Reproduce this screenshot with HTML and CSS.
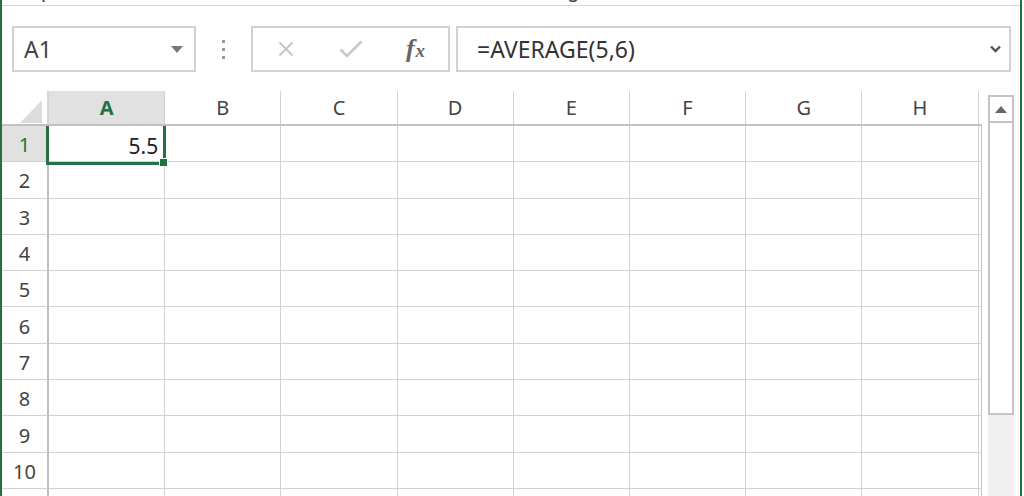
FILE: index.html
```html
<!DOCTYPE html>
<html lang="en">
<head>
<meta charset="utf-8">
<title>Sheet</title>
<link rel="stylesheet" href="styles.css">
</head>
<body>
<div class="window">
  <div class="ribbon-tail">
    <div class="ribbon-labels"><span class="lbl lbl-clip">Clipboard</span><span class="lbl lbl-align">Alignment</span></div>
  </div>

  <div class="formula-bar">
    <div class="namebox">
      <span>A1</span>
      <svg class="nb-arrow" width="12" height="7" viewBox="0 0 12 7"><polygon points="0,0 12,0 6,7" fill="#777"/></svg>
    </div>
    <div class="grip"><i></i><i></i><i></i></div>
    <div class="fxbox">
      <svg width="16" height="16" viewBox="0 0 16 16"><path d="M1.5 1.5 L14.5 14.5 M14.5 1.5 L1.5 14.5" stroke="#c8c8c8" stroke-width="2.2" fill="none"/></svg>
      <svg width="24" height="18" viewBox="0 0 24 18"><polyline points="1.5,9.5 8,16 22.5,1.5" stroke="#c8c8c8" stroke-width="2.6" fill="none"/></svg>
      <span class="fx"><span class="fx-f">f</span><span class="fx-x">x</span></span>
    </div>
    <div class="formula">
      <span>=AVERAGE(5,6)</span>
      <svg width="11" height="8" viewBox="0 0 11 8"><polyline points="1,1.5 5.5,6 10,1.5" stroke="#555" stroke-width="2.4" fill="none"/></svg>
    </div>
  </div>

  <div class="main">
    <div class="sheet">
      <div class="colhead">
        <div class="corner"><svg width="22" height="23" viewBox="0 0 22 23"><polygon points="22,0 22,23 0,23" fill="#dcdcdc"/></svg></div>
        <div class="ch sel">A</div>
        <div class="ch">B</div>
        <div class="ch">C</div>
        <div class="ch">D</div>
        <div class="ch">E</div>
        <div class="ch">F</div>
        <div class="ch">G</div>
        <div class="ch">H</div>
        <div class="ch fill"></div>
      </div>
      <div class="rows">
        <div class="rh sel">1</div><div class="c val">5.5<div class="selbox"><div class="handle"></div></div></div><div class="c"></div><div class="c"></div><div class="c"></div><div class="c"></div><div class="c"></div><div class="c"></div><div class="c"></div><div class="c fill"></div>
        <div class="rh">2</div><div class="c"></div><div class="c"></div><div class="c"></div><div class="c"></div><div class="c"></div><div class="c"></div><div class="c"></div><div class="c"></div><div class="c fill"></div>
        <div class="rh">3</div><div class="c"></div><div class="c"></div><div class="c"></div><div class="c"></div><div class="c"></div><div class="c"></div><div class="c"></div><div class="c"></div><div class="c fill"></div>
        <div class="rh">4</div><div class="c"></div><div class="c"></div><div class="c"></div><div class="c"></div><div class="c"></div><div class="c"></div><div class="c"></div><div class="c"></div><div class="c fill"></div>
        <div class="rh">5</div><div class="c"></div><div class="c"></div><div class="c"></div><div class="c"></div><div class="c"></div><div class="c"></div><div class="c"></div><div class="c"></div><div class="c fill"></div>
        <div class="rh">6</div><div class="c"></div><div class="c"></div><div class="c"></div><div class="c"></div><div class="c"></div><div class="c"></div><div class="c"></div><div class="c"></div><div class="c fill"></div>
        <div class="rh">7</div><div class="c"></div><div class="c"></div><div class="c"></div><div class="c"></div><div class="c"></div><div class="c"></div><div class="c"></div><div class="c"></div><div class="c fill"></div>
        <div class="rh">8</div><div class="c"></div><div class="c"></div><div class="c"></div><div class="c"></div><div class="c"></div><div class="c"></div><div class="c"></div><div class="c"></div><div class="c fill"></div>
        <div class="rh">9</div><div class="c"></div><div class="c"></div><div class="c"></div><div class="c"></div><div class="c"></div><div class="c"></div><div class="c"></div><div class="c"></div><div class="c fill"></div>
        <div class="rh">10</div><div class="c"></div><div class="c"></div><div class="c"></div><div class="c"></div><div class="c"></div><div class="c"></div><div class="c"></div><div class="c"></div><div class="c fill"></div>
        <div class="rh"></div><div class="c"></div><div class="c"></div><div class="c"></div><div class="c"></div><div class="c"></div><div class="c"></div><div class="c"></div><div class="c"></div><div class="c fill"></div>
      </div>
    </div>
    <div class="vscroll">
      <div class="sb-up"><svg width="12" height="7" viewBox="0 0 12 7"><polygon points="0,7 12,7 6,0" fill="#666"/></svg></div>
      <div class="sb-thumb"></div>
    </div>
  </div>
</div>
</body>
</html>
```

FILE: styles.css
```css
* { box-sizing: border-box; }
html, body { margin: 0; padding: 0; }
body {
  width: 1024px;
  height: 496px;
  overflow: hidden;
  background: #fff;
  font-family: "Noto Sans", "DejaVu Sans", sans-serif;
}

.window {
  width: 1022px;
  height: 496px;
  border-left: 2px solid #217346;
  border-right: 2px solid #217346;
  display: flex;
  flex-direction: column;
  overflow: hidden;
}

/* bottom edge of the ribbon, labels clipped */
.ribbon-tail {
  flex: none;
  height: 6px;
  border-bottom: 1px solid #d5d5d5;
  overflow: hidden;
}
.ribbon-labels {
  display: flex;
  margin-top: -20px;
  font-size: 20px;
  line-height: 20px;
  color: #444;
  white-space: nowrap;
}
.lbl-clip { margin-left: 16px; }
.lbl-align { margin-left: 435px; }

/* formula bar */
.formula-bar {
  flex: none;
  display: flex;
  height: 85px;
  padding: 20px 9px 19px 10px;
}
.namebox {
  width: 184px;
  border: 2px solid #d2d2d2;
  display: flex;
  align-items: center;
  justify-content: space-between;
  padding: 0 11px 0 10px;
  font-size: 23px;
  color: #444;
}
.grip {
  width: 55px;
  display: flex;
  flex-direction: column;
  align-items: center;
  justify-content: center;
  gap: 5px;
}
.grip i {
  display: block;
  width: 3px;
  height: 3px;
  background: #9a9a9a;
}
.fxbox {
  width: 199px;
  border: 2px solid #d2d2d2;
  display: grid;
  grid-template-columns: repeat(3, 1fr);
  align-items: center;
  justify-items: center;
}
.fx {
  font-family: "Liberation Serif", "DejaVu Serif", serif;
  font-style: italic;
  font-weight: bold;
  color: #666;
  line-height: 1;
}
.fx-f { font-size: 26px; }
.fx-x { font-size: 19px; margin-left: 1px; }
.formula {
  flex: 1;
  margin-left: 6px;
  border: 2px solid #d2d2d2;
  display: flex;
  align-items: center;
  justify-content: space-between;
  padding: 0 8px 0 19px;
  font-size: 23px;
  color: #333;
}

/* sheet */
.main {
  flex: 1;
  min-height: 0;
  display: flex;
  padding-right: 6px;
}
.sheet {
  width: 980px;
  display: flex;
  flex-direction: column;
  min-height: 0;
}
.colhead, .rows {
  display: grid;
  grid-template-columns: 47px repeat(8, 116.2px) 1fr;
}
.colhead {
  flex: none;
  height: 35px;
  border-bottom: 2px solid #c2c2c2;
}
.corner {
  border-right: 2px solid #d6d6d6;
  display: flex;
  justify-content: flex-end;
  align-items: flex-end;
  padding: 0 5px 1px 0;
}
.ch {
  display: flex;
  align-items: center;
  justify-content: center;
  border-right: 1px solid #d2d2d2;
  font-size: 20px;
  color: #444;
}
.ch.sel {
  background: #e1e1e1;
  color: #217346;
  font-weight: bold;
}
.ch.fill { border-right: none; }

.rows {
  flex: 1;
  min-height: 0;
  overflow: hidden;
  grid-auto-rows: 36.3px;
  border-right: 1px solid #c4c4c4;
}
.rh {
  display: flex;
  align-items: center;
  justify-content: center;
  padding-top: 2px;
  border-right: 2px solid #bfbfbf;
  border-bottom: 1px solid #d2d2d2;
  font-size: 20px;
  color: #444;
}
.rh.sel {
  background: #e1e1e1;
  color: #217346;
}
.c {
  border-right: 1px solid #d2d2d2;
  border-bottom: 1px solid #d2d2d2;
}
.c.fill { border-right: none; }
.c.val {
  position: relative;
  display: flex;
  align-items: center;
  justify-content: flex-end;
  padding: 4px 6px 0 0;
  font-size: 21px;
  color: #222;
}
.selbox {
  position: absolute;
  left: -3px;
  top: -3px;
  width: 120px;
  height: 42px;
  border: 3px solid #217346;
}
.handle {
  position: absolute;
  right: -5px;
  bottom: -5px;
  width: 9px;
  height: 9px;
  background: #217346;
  border: 1px solid #fff;
}

/* vertical scrollbar */
.vscroll {
  width: 26px;
  margin-left: 6px;
  margin-top: 4px;
  background: #f0f0f0;
  display: flex;
  flex-direction: column;
}
.sb-up {
  height: 26px;
  border: 2px solid #c4c4c4;
  border-bottom: none;
  background: #fff;
  display: flex;
  align-items: center;
  justify-content: center;
}
.sb-thumb {
  height: 294px;
  border: 2px solid #c4c4c4;
  background: #fff;
}
```
